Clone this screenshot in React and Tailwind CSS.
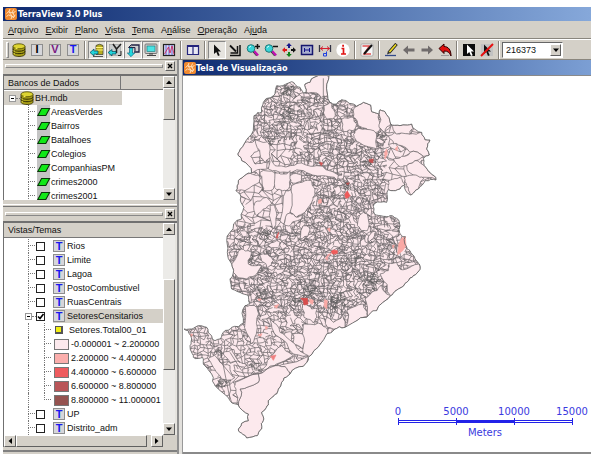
import React from "react";

const UI = "font-['Liberation_Sans',sans-serif]";

/* ---------- map geometry ---------- */

const hash = (a, b) => {
  const v = Math.sin(a * 12.9898 + b * 78.233) * 43758.5453;
  return v - Math.floor(v);
};

const pairs = (text) => text.trim().split(/\s+/).map((p) => p.split(",").map(Number));

// Adds wobble to every edge; an edge shared by two parcels gets the same wobble.
const rough = (points, depth = 2) => {
  let list = points;
  for (let d = 0; d < depth; d++) {
    const next = [];
    list.forEach((p, i) => {
      const q = list[(i + 1) % list.length];
      const mx = (p[0] + q[0]) / 2;
      const my = (p[1] + q[1]) / 2;
      const len = Math.hypot(p[0] - q[0], p[1] - q[1]);
      next.push(p);
      if (len > 9) {
        const k = Math.min(len, 40) * 0.34;
        next.push([mx + (hash(mx, my) - 0.5) * k, my + (hash(my, mx) - 0.5) * k]);
      }
    });
    list = next;
  }
  return list;
};

const toPath = (points) =>
  "M" + points.map((p) => p[0].toFixed(1) + " " + p[1].toFixed(1)).join("L") + "Z";

const OUTLINE = toPath(
  rough(
    pairs(`375,45 402,25 430,18 447,20 443,80 450,100 470,105 485,92 520,105 530,112 550,100 572,108 575,128 597,135
    600,122 615,128 632,165 660,170 695,165 700,178 715,188 725,190 735,212 750,213 740,240 748,258 730,268 733,290
    750,310 768,333 735,335 715,360 692,378 675,345 660,360 640,365 625,362 620,400 582,405 582,432 600,440 630,440
    650,448 660,470 665,500 676,503 678,530 690,545 705,570 718,585 720,602 700,620 680,640 655,660 632,680 590,725
    560,745 495,775 465,780 425,820 385,865 370,892 330,915 305,940 290,975 265,995 265,1008 245,1030 250,1055
    245,1080 232,1100 200,1107 180,1090 175,1080 205,1055 205,1035 175,1008 150,995 105,950 95,915 70,885 68,865
    40,865 30,830 35,810 25,785 12,780 40,778 80,775 85,790 105,815 120,810 130,790 155,775 190,762 195,710 210,705
    205,680 180,670 155,660 150,630 160,610 155,585 142,550 150,490 185,450 192,415 180,375 168,365 175,335 200,315
    215,312 185,275 173,255 195,220 220,185 222,140 245,130 250,100 285,75 290,50 335,38 360,55 370,72 378,70`)
  )
);

const PARCELS = [
  "402,25 430,18 447,20 443,80 425,85 410,72 378,70 375,45",
  "432,110 450,100 465,130 458,150 440,150",
  "485,150 520,145 530,165 520,185 490,188",
  "530,112 550,100 572,108 575,128 597,135 600,180 575,192 535,170 520,145",
  "600,122 615,128 632,165 615,190 597,175 597,135",
  "525,185 555,180 590,195 592,240 545,225 522,205",
  "625,200 660,195 690,195 725,190 735,212 750,213 740,240 748,258 730,262 690,250 665,230 640,225",
  "632,165 660,170 695,165 700,178 690,195 650,195",
  "640,270 665,262 690,250 730,262 705,275 680,290 655,290",
  "680,290 705,275 733,290 750,310 768,333 740,325 700,318",
  "672,325 700,318 732,328 715,360 692,378 680,350",
  "625,335 660,325 675,345 660,360 640,365 625,362",
  "270,265 285,290 330,290 365,282 410,290 475,318 472,335 430,320 370,305 300,310 265,300",
  "195,220 225,212 235,245 212,262 225,285 260,280 262,300 215,312 185,275 173,255",
  "225,212 262,218 270,265 258,280 240,255",
  "175,335 200,315 235,318 238,340 195,365 168,365",
  "240,310 285,312 290,340 280,360 250,365 238,340",
  "285,312 330,305 330,335 318,365 290,362",
  "330,320 365,318 365,335 332,340",
  "335,350 375,335 395,335 405,375 395,400 375,430 350,445 330,430",
  "318,365 332,362 330,430 312,465 300,455",
  "225,400 260,385 275,405 245,425 230,440",
  "270,410 285,408 290,440 280,480 268,440",
  "330,432 350,445 368,440 330,470 312,465",
  "550,430 562,435 562,485 545,485 532,470",
  "575,490 588,488 580,508 566,520",
  "190,530 210,530 205,560 180,600 155,595 175,560",
  "265,530 290,515 300,520 298,540",
  "240,560 262,555 280,575 262,598",
  "370,470 388,475 385,500 360,510",
  "460,355 478,350 482,368 466,378",
  "155,585 185,540 215,550 205,585 245,590 225,620 200,630 160,610",
  "415,630 428,620 428,650 416,652",
  "600,615 625,605 628,582 650,580 660,600 690,595 718,585 720,602 700,620 680,640 655,660 632,680",
  "555,690 575,670 605,648 632,680 590,725 562,742",
  "500,725 550,705 562,742 495,775",
  "370,765 415,762 442,780 425,820 385,865 368,845",
  "440,745 460,760 495,725 495,775 465,780 442,775",
  "368,705 395,720 412,720 410,745 400,762 372,745",
  "305,800 335,790 338,820 310,815",
  "338,795 368,795 368,840 340,828",
  "270,750 300,790 345,825 385,860 340,855 290,800",
  "305,830 340,860 240,915 262,875",
  "235,915 385,862 370,892 330,915 320,898 285,890",
  "285,890 235,915 235,940 180,960 175,1008 205,1035 205,1055 175,1080 180,1090 200,1107 232,1100 245,1080 250,1055 245,1030 265,1008 265,995 290,975 305,940 330,915 320,898",
  "165,940 235,915 235,940 180,960 175,1008 168,960",
  "195,710 230,715 232,775 212,825 195,762",
  "85,870 115,840 120,880 150,890 165,925 125,930 100,895",
  "130,850 155,840 165,860 180,880 150,880",
].map((s) => toPath(rough(pairs(s))));

const SPOTS = [
  ["#f05a5a", "495,375 502,366 510,380 502,388 496,386"],
  ["#f05a5a", "453,548 460,543 472,545 472,553 460,556"],
  ["#f7a6a6", "436,568 445,556 456,552 444,562 442,574"],
  ["#faa9a5", "656,525 665,508 676,503 678,530 668,545 653,557"],
  ["#faa9a5", "614,250 620,240 622,255 615,270"],
  ["#faa9a5", "645,240 652,232 652,245"],
  ["#c45050", "567,272 580,270 578,282 568,278"],
  ["#d05555", "418,280 428,282 424,290"],
  ["#faa9a5", "416,393 424,390 424,402 415,403"],
  ["#faa9a5", "442,480 450,477 450,488"],
  ["#d85858", "288,505 296,490 292,508"],
  ["#faa9a5", "637,530 643,528 640,538"],
  ["#d84c4c", "362,688 382,688 384,705 372,708 370,695"],
  ["#faa9a5", "388,690 400,694 398,706 390,702"],
  ["#faa9a5", "434,692 442,695 440,720 432,712"],
  ["#faa9a5", "282,712 296,706 290,718"],
  ["#faa9a5", "234,690 244,690 238,696"],
  ["#faa9a5", "234,798 246,794 242,802"],
  ["#faa9a5", "256,772 264,775 258,782"],
  ["#f08080", "272,862 288,858 280,874"],
  ["#faa9a5", "30,796 38,796 34,804"],
  ["#b05050", "498,343 508,341 504,348"],
];

const mesh = (x0, y0, x1, y1, step, keep, inside) => {
  const at = (i, j) => [
    x0 + (i + (j % 2) * 0.5 + (hash(i + 3, j + step) - 0.5) * 0.95) * step,
    y0 + (j + (hash(j + 9, i + step) - 0.5) * 0.95) * step,
  ];
  let d = "";
  for (let j = 0; j * step < y1 - y0; j++) {
    for (let i = 0; i * step < x1 - x0; i++) {
      const p = at(i, j);
      if (inside && !inside(p[0], p[1])) continue;
      const line = (q) => {
        d += `M${p[0].toFixed(1)} ${p[1].toFixed(1)}L${q[0].toFixed(1)} ${q[1].toFixed(1)}`;
      };
      if (hash(i + 31, j + 17) < keep) line(at(i + 1, j));
      if (hash(i + 57, j + 5) < keep) line(at(i, j + 1));
      if (hash(i + 71, j + 41) < 0.12) line(at(i + 1, j + 1));
    }
  }
  return d;
};

const sparse = (x, y) => (x > 610 && y < 380) || (x < 330 && y > 210 && y < 470);
const BLOCKS = mesh(0, 10, 780, 900, 10, 0.78, (x, y) => !sparse(x, y));
const WIDE = mesh(0, 10, 780, 1010, 18, 0.85, (x, y) => sparse(x, y) || y > 895);
const CORE = mesh(160, 40, 700, 740, 14, 0.5, (x, y) => !sparse(x, y));
const DENSE = [
  [275, 215, 22], [320, 60, 22], [260, 492, 16], [208, 568, 18], [570, 635, 34], [382, 668, 26],
  [345, 690, 20], [455, 700, 28], [245, 672, 22], [605, 196, 16], [500, 345, 14], [225, 900, 22],
  [125, 935, 22], [525, 570, 20], [480, 690, 24], [560, 282, 16], [320, 130, 26], [120, 850, 16],
].map(([cx, cy, r]) =>
  mesh(cx - r, cy - r, cx + r, cy + r, 6, 0.8, (x, y) => Math.hypot(x - cx, y - cy) < r * hash(x, y) * 1.1)
).join("");

function CityMap() {
  return (
    <svg viewBox="9 21 1224 1125" className="block h-[375px] w-[408px]" role="img" aria-label="SetoresCensitarios">
      <clipPath id="city"><path d={OUTLINE} /></clipPath>
      <path d={OUTLINE} fill="#fce9ed" />
      <g clipPath="url(#city)" fill="none" stroke="#6a6668" strokeWidth="2.1">
        <path d={BLOCKS} />
        <path d={WIDE} />
        <path d={CORE} />
        <path d={DENSE} stroke="#5a5a5a" />
        {PARCELS.map((d, i) => <path key={i} d={d} fill="#fce9ed" />)}
        <path d="M430 28V160M245 320L248 365M150 850L185 905M105 860L160 925M120 840L150 990M160 940L285 890L340 865" />
      </g>
      {SPOTS.map(([c, s], i) => <polygon key={i} points={s} fill={c} stroke={c} strokeWidth="2" />)}
      <path d={OUTLINE} fill="none" stroke="#666" strokeWidth="2.6" />
    </svg>
  );
}

function ScaleBar() {
  return (
    <svg viewBox="0 0 200 34" className="absolute right-0 bottom-[12px] h-[34px] w-[200px] font-['DejaVu_Sans',sans-serif] text-[10px]">
      <g fill="#3a3ae0" textAnchor="middle">
        <text x="7" y="9">0</text>
        <text x="65" y="9">5000</text>
        <text x="123" y="9">10000</text>
        <text x="181" y="9">15000</text>
        <text x="94" y="30">Meters</text>
      </g>
      <g fill="none" stroke="#2222e8" shapeRendering="crispEdges">
        <path d="M7.5 12v7M65.5 12v7M123.5 12v7M181.5 12v7M7 14.5h175M7 16.5h175" />
        <path d="M65 15.5h58" />
      </g>
    </svg>
  );
}

/* ---------- icons ---------- */

function Icon({ children }) {
  return <svg viewBox="0 0 14 14" className="block size-[14px] shrink-0" aria-hidden="true">{children}</svg>;
}

const Globe = () => (
  <svg viewBox="0 0 12 12" className="block size-[12px] shrink-0" aria-hidden="true">
    <rect width="12" height="12" rx="2" fill="#f08a30" />
    <path d="M1.500 5.500q2-3 4.500-1t4.500-1.500M1.500 8.500q2-3 4.500-.5t4.500-1M5 1q-2.500 3 .5 5t.5 5M8.500 1.500Q6.500 4 8.500 6t-.5 4" fill="none" stroke="#ffe9cc" strokeWidth=".9" />
  </svg>
);

const Database = () => (
  <Icon>
    <path d="M1 3.500v7.500c0 1.400 2.500 2.500 6 2.500s6-1.100 6-2.500V3.500z" fill="#aaa018" stroke="#2e2a00" strokeWidth=".8" />
    <ellipse cx="7" cy="3.300" rx="6" ry="2.500" fill="#ddd432" stroke="#4a4600" strokeWidth=".8" />
    <path d="M1 5.800c0 1.400 2.500 2.400 6 2.400s6-1 6-2.400M1 8.300c0 1.400 2.500 2.400 6 2.400s6-1 6-2.400" fill="none" stroke="#2e2a00" strokeWidth="1" />
    <path d="M2.200 7.500v1M2.200 10.200v1M3.500 5.400h2" stroke="#fff65a" />
  </Icon>
);

const Layer = () => (
  <span className="flex h-[14px] w-[13px] shrink-0 items-center bg-[#c4c4c4]">
    <Icon><path d="M.8 10.500L4.600 3.500H12.600L8.800 10.500z" fill="#10e818" stroke="#083808" strokeWidth="1.100" /></Icon>
  </span>
);

const Letter = ({ children, tone }) => (
  <span className={`flex size-[12px] shrink-0 items-center justify-center border border-[#8e8e8e] bg-[#d6d6da] font-['Liberation_Sans',sans-serif] text-[11px] leading-none font-bold ${tone}`}>
    {children}
  </span>
);

const Pointer = ({ fill = "#111", x = 0 }) => (
  <path d={`M${4 + x} 1.500v9.500l2.300-2 1.700 4 1.700-.8L${8 + x} 8.400h3z`} fill={fill} />
);

const Lens = ({ plus }) => (
  <Icon>
    <path d="M8 8l4 4.500" stroke="#c010b0" strokeWidth="2.600" />
    <path d="M7 9l3.500 4" stroke="#222" strokeWidth=".8" />
    <circle cx="5" cy="5.500" r="3.800" fill="#39d5d8" stroke="#207878" />
    <path d="M3 4.500l2-1.500" stroke="#dff" />
    <path d={plus ? "M9 3.500h5M11.500 1v5" : "M9 3.500h5"} stroke="#111" strokeWidth="1.500" />
  </Icon>
);

const Screen = () => (
  <Icon>
    <rect x="1" y="1" width="12" height="9.500" rx="1" fill="#c8c8c8" stroke="#777" />
    <rect x="3" y="3" width="8" height="5.500" fill="#4be3e4" stroke="#177" strokeWidth=".6" />
    <path d="M3 12.500h9M5 11h4" stroke="#444" />
  </Icon>
);

const ViewToDb = () => (
  <Icon>
    <path d="M6 2.500q3.500-2.500 7 0v9H6z" fill="#b8ae20" stroke="#333" strokeWidth=".7" />
    <path d="M6 4.500h7M6 7h7" stroke="#fff27a" />
    <path d="M0 9.500l4-3.500v2h4v3H4v2z" fill="#22d6dc" stroke="#045" strokeWidth=".7" />
    <path d="M3 13.500h10" stroke="#555" />
  </Icon>
);

const ViewY = () => (
  <Icon>
    <rect x="1.500" y="1.500" width="11" height="11" fill="#c8cccc" stroke="#999" strokeWidth=".6" />
    <path d="M5 1l3.500 5L13 1M8.500 6v4" fill="none" stroke="#222" strokeWidth="1.500" />
    <path d="M0 9.500l4-3v2h4v2.500H4v2z" fill="#22d6dc" stroke="#045" strokeWidth=".7" />
    <path d="M10 12.500h3V8" fill="none" stroke="#222" />
  </Icon>
);

const ThemeDown = () => (
  <Icon>
    <path d="M5 2h8v7H8" fill="#d0d0d0" stroke="#224" strokeWidth="1.300" />
    <path d="M5 2L2.500 4.500H9V8" fill="#aaa" stroke="#224" />
    <path d="M3.500 5h3v5h2.200L5 13.700 1.300 10h2.200z" fill="#22d6dc" stroke="#057" strokeWidth=".6" />
  </Icon>
);

const Chart = () => (
  <Icon>
    <rect x="1.500" y="1.500" width="11" height="11" fill="#dadaf0" stroke="#222" strokeWidth="1.200" />
    <path d="M4 2v10M7 2v10M10 2v10" stroke="#4a4ad0" strokeWidth=".8" />
    <path d="M2.500 11l4-7 1.500 6L10 3l2 8" fill="none" stroke="#d02050" strokeWidth=".8" />
  </Icon>
);

const Panes = () => (
  <Icon>
    <path d="M1.500 2.500h11v9h-11zM7 2.500v9" fill="#e8e8f2" stroke="#25257d" strokeWidth="1.200" />
    <path d="M1 3h12" stroke="#25257d" strokeWidth="2" />
  </Icon>
);

const Corner = () => (
  <Icon>
    <path d="M12 2v10.500H2M9.500 3v7H2.500" fill="none" stroke="#111" strokeWidth="1.500" />
    <path d="M2 2.500l6 6" stroke="#111" strokeWidth="1.800" />
  </Icon>
);

const Move = () => (
  <Icon>
    <path d="M7 0l2.800 3H8v2H6V3H4.200z" fill="#18188a" />
    <path d="M7 14l2.800-3H8V9H6v2H4.200z" fill="#108018" />
    <path d="M0 7l3-2.800V6h2v2H3v1.800z" fill="#e01818" />
    <path d="M14 7l-3-2.800V6H9v2h2v1.800z" fill="#111" />
  </Icon>
);

const Extent = () => (
  <Icon>
    <rect x="1.500" y="2.500" width="11" height="9" fill="#aab0d0" stroke="#16166e" strokeWidth="1.500" />
    <path d="M4.500 5v4M9.500 5v4M4.500 7h5" stroke="#111188" />
  </Icon>
);

const Distance = () => (
  <Icon>
    <path d="M1.500 2v7M12.500 2v7" stroke="#334" strokeWidth="1.300" />
    <path d="M2 5.500h10M5 3.500L2.500 5.500 5 7.500M9 3.500l2.500 2L9 7.500" fill="none" stroke="#d42030" />
    <path d="M8.500 8.500v4.500h-3v-2.500h3" fill="none" stroke="#2040e0" />
  </Icon>
);

const Info = () => (
  <Icon>
    <circle cx="7" cy="7" r="6.700" fill="#fff" />
    <path d="M5.500 5.500H7.500v5M5 11h5" fill="none" stroke="#e01414" strokeWidth="1.700" />
    <path d="M6.200 2.800H8" stroke="#e01414" strokeWidth="1.900" />
  </Icon>
);

const Erase = () => (
  <Icon>
    <rect x="1" y="1" width="12" height="12" rx="1" fill="#f6f6f6" stroke="#999" strokeWidth=".7" />
    <path d="M2.500 3h7L4 11h7" fill="none" stroke="#e05050" strokeWidth="1.500" />
    <path d="M12 2L4 11" stroke="#111" strokeWidth="2" />
  </Icon>
);

const Pencil = () => (
  <Icon>
    <path d="M12.500 1L5 9.500" stroke="#222" strokeWidth="3.400" />
    <path d="M12 1.500L5 9.500" stroke="#f0dc20" strokeWidth="1.700" />
    <path d="M3 11.500l1-3.500 2.500 2z" fill="#333" />
    <path d="M1 12.500h11" stroke="#334a8a" strokeWidth="1.300" />
  </Icon>
);

const Arrow = ({ back }) => (
  <Icon>
    <path d={back ? "M1 7l5-4.500v3h6.500v3H6v3z" : "M13 7L8 2.500v3H1.500v3H8v3z"} fill="#706c6c" />
  </Icon>
);

const Undo = () => (
  <Icon>
    <path d="M1 5.500L6 1v2.500c4.500 0 7 3.500 7 9.500-1.500-3.500-3-5-7-5v2.500z" fill="#e01010" stroke="#300" />
    <path d="M3 12.500h8" stroke="#999" />
  </Icon>
);

const Pick = () => (
  <Icon>
    <rect x="1" y="1" width="12" height="12" fill="#0c0c0c" />
    <Pointer fill="#fff" x={1} />
  </Icon>
);

const Unpick = () => (
  <Icon>
    <rect x="1" y="1" width="12" height="12" fill="#c2c2c2" />
    <Pointer />
    <path d="M13 1L1 13" stroke="#e81010" strokeWidth="2" />
  </Icon>
);

/* ---------- widgets ---------- */

const RAISED = "border border-t-white border-l-white border-r-[#606060] border-b-[#606060] bg-[#d4d0c8]";

function Tool({ label, pressed, children }) {
  return (
    <button
      type="button"
      aria-label={label}
      className={`flex h-[18px] w-[18px] shrink-0 items-center justify-center ${
        pressed ? "border border-t-[#888] border-l-[#888] border-r-white border-b-white bg-[#e6e4df]" : ""
      }`}
    >
      {children}
    </button>
  );
}

const Divider = () => <span className="mx-[2px] h-[18px] w-[2px] shrink-0 border-r border-l border-r-white border-l-[#85817a]" />;

const Caret = ({ dir }) => (
  <svg viewBox="0 0 8 8" className="size-[8px] shrink-0" aria-hidden="true">
    {dir === "up" && <path d="M1 6h6L4 2.500z" />}
    {dir === "down" && <path d="M1 2.500h6L4 6z" />}
    {dir === "left" && <path d="M6 1v6L2.500 4z" />}
    {dir === "right" && <path d="M2 1v6l3.500-3z" />}
  </svg>
);

const ScrollButton = ({ dir }) => (
  <button type="button" aria-label={`Scroll ${dir}`} className={`flex size-[12px] shrink-0 items-center justify-center ${RAISED}`}>
    <Caret dir={dir} />
  </button>
);

function VScroll({ before, thumb }) {
  return (
    <div className="flex w-[12px] shrink-0 flex-col bg-[#ecebe8]">
      <ScrollButton dir="up" />
      <div className={before} />
      <div className={`${RAISED} ${thumb}`} />
      <div className="flex-1" />
      <ScrollButton dir="down" />
    </div>
  );
}

function DockGrip() {
  return (
    <div className="flex h-[11px] items-center gap-[2px] pr-[2px] pl-[2px]">
      <div className="h-[4px] flex-1 border border-t-white border-l-white border-r-[#888] border-b-[#888]" />
      <button type="button" aria-label="Close" className={`flex size-[10px] items-center justify-center ${RAISED}`}>
        <svg viewBox="0 0 6 6" className="size-[6px]" aria-hidden="true"><path d="M1 1l4 4M5 1L1 5" stroke="#000" strokeWidth="1.400" /></svg>
      </button>
    </div>
  );
}

const Fold = () => (
  <button type="button" aria-label="Collapse" className="flex size-[7px] shrink-0 items-center justify-center border border-[#999] bg-white">
    <span className="h-px w-[3px] bg-black" />
  </button>
);

const Branch = ({ last }) => (
  <span className="flex h-[14px] w-[7px] shrink-0 flex-col">
    <span className="h-[7px] border-b border-l border-dotted border-[#777]" />
    <span className={`h-[7px] border-dotted border-[#777] ${last ? "" : "border-l"}`} />
  </span>
);

const Trunk = () => <span className="h-[14px] w-[16px] shrink-0 border-l border-dotted border-[#777]" />;

const TABLES = ["AreasVerdes", "Bairros", "Batalhoes", "Colegios", "CompanhiasPM", "crimes2000", "crimes2001"];

const LEGEND = [
  ["bg-[#fce9ed]", "-0.000001 ~ 2.200000"],
  ["bg-[#fbaeac]", "2.200000 ~ 4.400000"],
  ["bg-[#ee5b5e]", "4.400000 ~ 6.600000"],
  ["bg-[#b95558]", "6.600000 ~ 8.800000"],
  ["bg-[#955350]", "8.800000 ~ 11.000001"],
];

function Theme({ name, checked }) {
  return (
    <li className={`flex h-[14px] items-center ${checked ? "pl-[21px]" : "pl-[24px]"}`}>
      {checked ? (
        <>
          <Fold />
          <span className="w-[4px] border-t border-dotted border-[#777]" />
        </>
      ) : (
        <span className="mr-px flex"><Branch /></span>
      )}
      <label className={`flex h-[14px] items-center ${checked ? "flex-1" : ""}`}>
        <span className="relative mr-[8px] flex size-[9px] shrink-0">
          <input type="checkbox" defaultChecked={checked} className="peer size-[9px] appearance-none border border-[#222] bg-white" />
          <svg viewBox="0 0 9 9" className="pointer-events-none absolute inset-0 hidden size-[9px] peer-checked:block" aria-hidden="true">
            <path d="M2 4.500l2 2 3.500-4.500" fill="none" stroke="#000" strokeWidth="1.600" />
          </svg>
        </span>
        <span className={`flex h-[14px] items-center gap-[2px] ${checked ? "flex-1 bg-[#d4d0c8]" : ""}`}>
          <Letter tone="text-[#1717f0]">T</Letter>
          {name}
        </span>
      </label>
    </li>
  );
}

const MENU = [
  ["", "A", "rquivo"], ["", "E", "xibir"], ["", "P", "lano"], ["", "V", "ista"],
  ["", "T", "ema"], ["A", "n", "álise"], ["", "O", "peração"], ["Aj", "u", "da"],
];

export default function App() {
  return (
    <div className={`flex h-screen flex-col bg-white pt-[7px] pr-[10px] pb-[9px] pl-[3px] ${UI} text-[9px] leading-[14px] text-[#111]`}>
      <header className="flex h-[14px] shrink-0 items-center gap-px bg-linear-to-r from-[#0f2a70] to-[#86a8da] pl-[2px] font-['DejaVu_Sans_Condensed','DejaVu_Sans',sans-serif] text-[9px] font-bold text-white">
        <Globe />
        <h1>TerraView 3.0 Plus</h1>
      </header>

      <nav className="flex h-[18px] shrink-0 items-center gap-[7px] border-b border-[#8a867e] bg-[#d4d0c8] pl-[5px]">
        {MENU.map(([a, key, b]) => (
          <button type="button" key={key + b}>{a}<u>{key}</u>{b}</button>
        ))}
      </nav>

      <div className="flex h-[21px] shrink-0 items-center border-t border-b border-t-white border-b-[#8a867e] bg-[#d4d0c8] pl-[3px]">
        <span className="mr-[1px] h-[16px] w-[3px] border border-t-white border-l-white border-r-[#888] border-b-[#888]" />
        <Tool label="Banco de Dados"><Database /></Tool>
        <Tool label="Importar"><Letter tone="text-black">I</Letter></Tool>
        <Tool label="Nova Vista"><Letter tone="text-[#7a1880]">V</Letter></Tool>
        <Tool label="Novo Tema"><Letter tone="text-[#1717f0]">T</Letter></Tool>
        <Divider />
        <Tool label="Bancos" pressed><ViewToDb /></Tool>
        <Tool label="Vistas" pressed><ViewY /></Tool>
        <Tool label="Temas" pressed><ThemeDown /></Tool>
        <Tool label="Tela" pressed><Screen /></Tool>
        <Tool label="Gráfico"><Chart /></Tool>
        <Divider />
        <Tool label="Janelas"><Panes /></Tool>
        <Divider />
        <Tool label="Cursor" pressed><Icon><Pointer /></Icon></Tool>
        <Tool label="Recompor"><Corner /></Tool>
        <Tool label="Aumentar"><Lens plus /></Tool>
        <Tool label="Diminuir"><Lens /></Tool>
        <Tool label="Mover"><Move /></Tool>
        <Tool label="Área"><Extent /></Tool>
        <Tool label="Distância"><Distance /></Tool>
        <Tool label="Informação"><Info /></Tool>
        <Divider />
        <Tool label="Apagar"><Erase /></Tool>
        <Divider />
        <Tool label="Editar"><Pencil /></Tool>
        <Tool label="Anterior"><Arrow back /></Tool>
        <Tool label="Próximo"><Arrow /></Tool>
        <Tool label="Desfazer"><Undo /></Tool>
        <Divider />
        <Tool label="Selecionar"><Pick /></Tool>
        <Tool label="Remover seleção"><Unpick /></Tool>
        <Divider />
        <span className="relative flex">
          <select aria-label="Escala" className="h-[16px] w-[61px] appearance-none border border-t-[#666] border-l-[#666] border-r-white border-b-white bg-white pl-[3px] text-[9px] leading-[14px]">
            <option>216373</option>
          </select>
          <span className={`pointer-events-none absolute top-[2px] right-[2px] flex h-[12px] w-[11px] items-center justify-center ${RAISED}`}><Caret dir="down" /></span>
        </span>
      </div>

      <main className="flex min-h-0 flex-1 bg-[#d4d0c8]">
        <aside className="flex w-[174px] shrink-0 flex-col">
          <DockGrip />
          <section className="mt-[3px] flex h-[126px] shrink-0 border-t-2 border-l border-[#707070] bg-white">
            <div className="flex-1 overflow-hidden">
              <div className="flex h-[14px] items-center border-b border-[#777] bg-[#d4d0c8]">
                <h2 className="w-[117px] border-r border-[#777] pl-[4px]">Bancos de Dados</h2>
              </div>
              <div className="mt-px flex h-[14px] w-[118px] items-center bg-[#d4d0c8] pl-[5px]">
                <Fold />
                <span className="w-[4px] border-t border-dotted border-[#777]" />
                <Database />
                <span className="pl-px">BH.mdb</span>
              </div>
              <ul>
                {TABLES.map((name) => (
                  <li key={name} className="flex h-[14px] items-center pl-[24px]">
                    <Branch />
                    <span className="mr-px ml-[2px] flex"><Layer /></span>
                    {name}
                  </li>
                ))}
              </ul>
            </div>
            <VScroll before="h-0" thumb="h-[32px]" />
            <span className="w-[2px] bg-[#e6e4df]" />
          </section>

          <div className="mt-[4px] h-[3px] shrink-0 border-t border-b border-t-white border-b-[#777]" />
          <div className="mt-px shrink-0"><DockGrip /></div>

          <section className="mt-[2px] flex min-h-0 flex-1 flex-col border-t-2 border-l border-[#707070] bg-white">
            <div className="flex min-h-0 flex-1">
              <div className="flex-1 overflow-hidden">
                <h2 className="h-[15px] border-b border-[#777] bg-[#d4d0c8] pl-[4px]">Vistas/Temas</h2>
                <ul className="pt-px">
                  {["Rios", "Limite", "Lagoa", "PostoCombustivel", "RuasCentrais"].map((n) => <Theme key={n} name={n} />)}
                  <Theme name="SetoresCensitarios" checked />
                  <li className="flex h-[14px] items-center pl-[24px]">
                    <Trunk />
                    <Branch />
                    <span className="mr-[6px] ml-[4px] size-[8px] shrink-0 border border-r-2 border-b-2 border-[#555] bg-[#f4f010]" />
                    Setores.Total00_01
                  </li>
                  {LEGEND.map(([tone, text], i) => (
                    <li key={text} className="flex h-[14px] items-center pl-[24px] whitespace-nowrap">
                      <Trunk />
                      <Branch last={i === 4} />
                      <span className={`mr-[2px] ml-[3px] h-[11px] w-[15px] shrink-0 border border-[#777] ${tone}`} />
                      {text}
                    </li>
                  ))}
                  <Theme name="UP" />
                  <Theme name="Distrito_adm" />
                </ul>
              </div>
              <VScroll before="h-[44px]" thumb="h-[91px]" />
              <span className="w-[2px] bg-[#e6e4df]" />
            </div>
            <div className="flex h-[12px] shrink-0 bg-[#d4d0c8] pr-[14px]">
              <ScrollButton dir="left" />
              <div className={`h-[12px] w-[131px] ${RAISED}`} />
              <span className="flex-1" />
              <ScrollButton dir="right" />
            </div>
          </section>
          <div className="mt-[3px] mb-[2px] h-[2px] shrink-0 bg-[#808080]" />
        </aside>

        <div className="w-[6px] shrink-0 border-r border-l-2 border-r-[#999] border-l-[#909090] bg-[#e2e0dc]" />

        <section className="flex min-w-0 flex-1 flex-col">
          <header className="flex h-[15px] shrink-0 items-center bg-linear-to-r from-[#0f2a70] to-[#7c9fd4] pl-px font-['DejaVu_Sans_Condensed','DejaVu_Sans',sans-serif] text-[9px] font-bold text-white">
            <Globe />
            <h2>Tela de Visualização</h2>
          </header>
          <div className="relative min-h-0 flex-1 overflow-hidden border-t border-b-2 border-[#8a8a8a] bg-white">
            <CityMap />
            <ScaleBar />
          </div>
        </section>
      </main>
    </div>
  );
}
